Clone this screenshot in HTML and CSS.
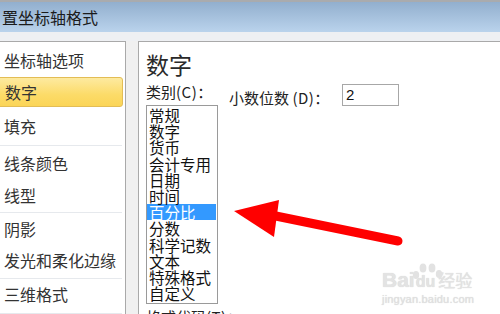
FILE: index.html
```html
<!DOCTYPE html>
<html lang="zh-CN">
<head>
<meta charset="utf-8">
<title>设置坐标轴格式</title>
<link rel="stylesheet" href="styles.css">
</head>
<body>
<div class="window">
  <div class="titlebar"><span class="title">置坐标轴格式</span></div>
  <div class="strip"></div>
  <div class="main">
    <div class="nav">
      <div class="nav-item i1">坐标轴选项</div>
      <div class="nav-item sel">数字</div>
      <div class="nav-item i3">填充</div>
      <div class="sep"></div>
      <div class="nav-item i4">线条颜色</div>
      <div class="nav-item i5">线型</div>
      <div class="sep"></div>
      <div class="nav-item i6">阴影</div>
      <div class="nav-item i7">发光和柔化边缘</div>
      <div class="sep"></div>
      <div class="nav-item i8">三维格式</div>
      <div class="sep"></div>
    </div>
    <div class="content">
      <div class="heading">数字</div>
      <div class="form">
        <div class="col1">
          <div class="label l1">类别<span class="key">(C)</span>：</div>
          <div class="listbox">
            <div class="opt">常规</div>
            <div class="opt">数字</div>
            <div class="opt">货币</div>
            <div class="opt">会计专用</div>
            <div class="opt">日期</div>
            <div class="opt">时间</div>
            <div class="opt on">百分比</div>
            <div class="opt">分数</div>
            <div class="opt">科学记数</div>
            <div class="opt">文本</div>
            <div class="opt">特殊格式</div>
            <div class="opt">自定义</div>
          </div>
          <div class="label l3">格式代码<span class="key">(T)</span>：</div>
        </div>
        <div class="label l2">小数位数 <span class="key">(D)</span>：</div>
        <div class="input">2</div>
      </div>
    </div>
  </div>
</div>

<svg class="arrow" width="500" height="314" viewBox="0 0 500 314">
  <line x1="266" y1="214" x2="398" y2="241" stroke="#ff0000" stroke-width="9" stroke-linecap="round"/>
  <polygon points="234,211 279,200 274,237" fill="#ff0000"/>
</svg>

<div class="watermark">
  <svg class="paw" width="34" height="20" viewBox="0 0 34 20">
    <ellipse cx="6" cy="13" rx="3.2" ry="4" />
    <ellipse cx="13" cy="6" rx="3.4" ry="4.5" />
    <ellipse cx="22" cy="6" rx="3.4" ry="4.5" />
    <ellipse cx="29" cy="12" rx="3.2" ry="4" />
  </svg>
  <div class="wm-line"><span class="bai">Bai</span><span class="du">du</span><span class="jy">经验</span></div>
  <div class="wm-url">jingyan.baidu.com</div>
</div>
</body>
</html>
```

FILE: styles.css
```css
html, body {
  margin: 0;
  padding: 0;
}
body {
  width: 500px;
  height: 314px;
  overflow: hidden;
  background: #f0f0f0;
  font-family: "Noto Sans CJK SC", "Noto Sans", sans-serif;
  color: #222;
  position: relative;
}
.window {
  width: 500px;
  height: 314px;
  display: flex;
  flex-direction: column;
}
.titlebar {
  height: 30px;
  border-top: 2px solid #a9abae;
  background: linear-gradient(#92afce, #bad3ec);
  padding-left: 2px;
  flex: none;
}
.title {
  font-size: 16px;
  line-height: 30px;
  color: #1b1b1b;
}
.strip {
  height: 9px;
  flex: none;
  background: #eef0f3;
}
.main {
  flex: 1;
  display: flex;
  min-height: 0;
}
.nav {
  width: 127px;
  box-sizing: border-box;
  margin-left: -1px;
  background: #fff;
  border: 1px solid #a9a9a9;
  border-bottom: none;
  flex: none;
}
.nav-item {
  font-size: 16px;
  padding-left: 4px;
  color: #333;
  white-space: nowrap;
}
.i1 { padding-top: 2px; height: 33px; line-height: 33px; }
.sel {
  height: 30px;
  box-sizing: border-box;
  margin-left: -4px;
  margin-right: 2px;
  padding-left: 8px;
  border: 1px solid #e3bd55;
  border-radius: 3px;
  background: linear-gradient(#fdeaa0, #fcdb68 60%, #fbd557);
  line-height: 28px;
}
.i3 { height: 38px; line-height: 38px; }
.i4 { height: 34px; line-height: 34px; }
.i5 { height: 32px; line-height: 30px; }
.i6 { height: 33px; line-height: 33px; }
.i7 { height: 32px; line-height: 28px; }
.i8 { height: 34px; line-height: 31px; }
.sep {
  height: 1px;
  margin-right: 3px;
  background: #e6e9ed;
}
.content {
  flex: 1;
  margin-left: 12px;
  background: #fff;
  border-top: 1px solid #a9a9a9;
  border-left: 1px solid #a9a9a9;
  padding-left: 7px;
}
.heading {
  margin-top: 9px;
  font-size: 23px;
  line-height: 26px;
  color: #2a2a2a;
}
.form {
  display: grid;
  grid-template-columns: 84px 112px 57px;
  align-items: start;
}
.label {
  font-size: 15px;
  line-height: 18px;
  color: #222;
  white-space: nowrap;
}
.key {
  letter-spacing: 0.5px;
}
.l1 { margin-top: 6px; }
.l2 { margin-top: 12px; margin-left: -1px; }
.l3 { margin-top: 4px; }
.input {
  margin-top: 7px;
  height: 22px;
  box-sizing: border-box;
  border: 1px solid #a7a7a7;
  font-family: "Liberation Sans", Arial, sans-serif;
  font-size: 15px;
  line-height: 20px;
  padding-left: 3px;
  color: #111;
}
.listbox {
  margin-top: 4px;
  width: 72px;
  height: 199px;
  box-sizing: border-box;
  border: 1px solid #9a9a9a;
  padding-top: 1px;
}
.opt {
  height: 16.2px;
  line-height: 16.2px;
  font-size: 15.5px;
  padding-left: 2px;
  margin-right: 1px;
  color: #111;
  white-space: nowrap;
}
.opt.on {
  background: #3399ff;
  color: #fff;
}
.arrow {
  position: absolute;
  left: 0;
  top: 0;
  pointer-events: none;
}
.watermark {
  position: absolute;
  left: 382px;
  top: 260px;
  width: 100px;
  color: #dedede;
  pointer-events: none;
}
.paw {
  position: absolute;
  left: 28px;
  top: 2px;
  fill: #e2e2e2;
}
.wm-line {
  display: flex;
  align-items: baseline;
  margin-top: 9px;
  height: 22px;
  white-space: nowrap;
}
.bai {
  font-family: "Liberation Sans", Arial, sans-serif;
  font-weight: bold;
  font-size: 21px;
  line-height: 22px;
  color: #e3e3e3;
  text-shadow: 0 0 1px #d0d0d0;
}
.du {
  font-family: "Liberation Sans", Arial, sans-serif;
  font-weight: bold;
  font-size: 16px;
  line-height: 22px;
  margin-left: 1px;
  color: #e3e3e3;
  text-shadow: 0 0 1px #d0d0d0;
}
.jy {
  font-size: 17px;
  line-height: 22px;
  margin-left: 3px;
  color: #e3e3e3;
  text-shadow: 0 0 1px #d0d0d0;
}
.wm-url {
  font-family: "Liberation Sans", Arial, sans-serif;
  font-size: 11px;
  line-height: 14px;
  margin-top: 1px;
  color: #e0e0e0;
  letter-spacing: 0.2px;
  text-shadow: 0 0 1px #d4d4d4;
}
```
